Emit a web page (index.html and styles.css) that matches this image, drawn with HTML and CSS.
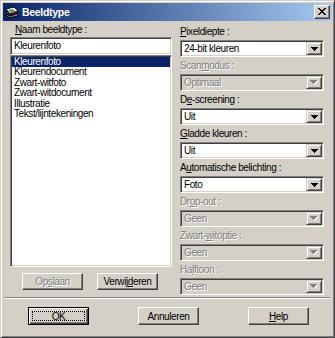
FILE: index.html
```html
<!DOCTYPE html>
<html lang="nl">
<head>
  <meta charset="UTF-8" />
  <title>Beeldtype</title>
  <link rel="stylesheet" href="styles.css">
</head>
<body>
  <div class="window">
    <div class="titlebar">
      <svg class="app-icon" width="14" height="13" viewBox="0 0 14 13">
        <path d="M1 3 L9 1 L13 5 L5 8 Z" fill="#fff" stroke="#000" stroke-width="1"/>
        <path d="M3 4 L8 3 L10 5 L5 6 Z" fill="#3cb043"/>
        <path d="M5 6 L10 5 L11 6 L6 7 Z" fill="#e03030"/>
        <path d="M1 8 L5 10 L13 7 L13 10 L5 12 L1 10 Z" fill="#7a7a7a" stroke="#000" stroke-width="1"/>
      </svg>
      <span class="title">Beeldtype</span>
      <button class="close-btn" aria-label="Sluiten">
        <svg width="8" height="7" viewBox="0 0 8 7" shape-rendering="crispEdges">
          <path d="M0 0h2v1h1v1h2v-1h1v-1h2v1h-1v1h-1v1h-1v1h1v1h1v1h1v1h-2v-1h-1v-1h-2v1h-1v1h-2v-1h1v-1h1v-1h1v-1h-1v-1h-1v-1h-1z"/>
        </svg>
      </button>
    </div>

    <div class="main">
      <!-- Left: image type list -->
      <div class="col-left">
        <div class="label-left"><u>N</u>aam beeldtype :</div>
        <div class="textbox">Kleurenfoto</div>
        <ul class="listbox">
          <li class="selected">Kleurenfoto</li>
          <li>Kleurendocument</li>
          <li>Zwart-witfoto</li>
          <li>Zwart-witdocument</li>
          <li>Illustratie</li>
          <li>Tekst/lijntekeningen</li>
        </ul>
        <div class="left-buttons">
          <button class="btn disabled">Op<u>s</u>laan</button>
          <button class="btn">Verwij<u>d</u>eren</button>
        </div>
      </div>

      <!-- Right: settings -->
      <div class="col-right">
        <div class="field">
          <div class="label"><u>P</u>ixeldiepte :</div>
          <div class="combo"><span class="value">24-bit kleuren</span><span class="arrow"><svg width="7" height="4" shape-rendering="crispEdges"><path d="M0 0h7v1h-1v1h-1v1h-1v1h-1v-1h-1v-1h-1v-1h-1z"/></svg></span></div>
        </div>
        <div class="field disabled">
          <div class="label">Scan<u>m</u>odus :</div>
          <div class="combo"><span class="value">Optimaal</span><span class="arrow"><svg width="8" height="5" shape-rendering="crispEdges"><path class="hl" d="M1 1h7v1h-1v1h-1v1h-1v1h-1v-1h-1v-1h-1v-1h-1z"/><path d="M0 0h7v1h-1v1h-1v1h-1v1h-1v-1h-1v-1h-1v-1h-1z"/></svg></span></div>
        </div>
        <div class="field">
          <div class="label">D<u>e</u>-screening :</div>
          <div class="combo"><span class="value">Uit</span><span class="arrow"><svg width="7" height="4" shape-rendering="crispEdges"><path d="M0 0h7v1h-1v1h-1v1h-1v1h-1v-1h-1v-1h-1v-1h-1z"/></svg></span></div>
        </div>
        <div class="field">
          <div class="label"><u>G</u>ladde kleuren :</div>
          <div class="combo"><span class="value">Uit</span><span class="arrow"><svg width="7" height="4" shape-rendering="crispEdges"><path d="M0 0h7v1h-1v1h-1v1h-1v1h-1v-1h-1v-1h-1v-1h-1z"/></svg></span></div>
        </div>
        <div class="field">
          <div class="label">A<u>u</u>tomatische belichting :</div>
          <div class="combo"><span class="value">Foto</span><span class="arrow"><svg width="7" height="4" shape-rendering="crispEdges"><path d="M0 0h7v1h-1v1h-1v1h-1v1h-1v-1h-1v-1h-1v-1h-1z"/></svg></span></div>
        </div>
        <div class="field disabled">
          <div class="label">Dr<u>o</u>p-out :</div>
          <div class="combo"><span class="value">Geen</span><span class="arrow"><svg width="8" height="5" shape-rendering="crispEdges"><path class="hl" d="M1 1h7v1h-1v1h-1v1h-1v1h-1v-1h-1v-1h-1v-1h-1z"/><path d="M0 0h7v1h-1v1h-1v1h-1v1h-1v-1h-1v-1h-1v-1h-1z"/></svg></span></div>
        </div>
        <div class="field disabled">
          <div class="label">Zwart-<u>w</u>itoptie :</div>
          <div class="combo"><span class="value">Geen</span><span class="arrow"><svg width="8" height="5" shape-rendering="crispEdges"><path class="hl" d="M1 1h7v1h-1v1h-1v1h-1v1h-1v-1h-1v-1h-1v-1h-1z"/><path d="M0 0h7v1h-1v1h-1v1h-1v1h-1v-1h-1v-1h-1v-1h-1z"/></svg></span></div>
        </div>
        <div class="field disabled">
          <div class="label">Ha<u>l</u>ftoon :</div>
          <div class="combo"><span class="value">Geen</span><span class="arrow"><svg width="8" height="5" shape-rendering="crispEdges"><path class="hl" d="M1 1h7v1h-1v1h-1v1h-1v1h-1v-1h-1v-1h-1v-1h-1z"/><path d="M0 0h7v1h-1v1h-1v1h-1v1h-1v-1h-1v-1h-1v-1h-1z"/></svg></span></div>
        </div>
      </div>
    </div>

    <div class="separator"></div>

    <div class="footer">
      <button class="btn default"><span class="focus">OK</span></button>
      <button class="btn">Annuleren</button>
      <button class="btn"><u>H</u>elp</button>
    </div>
  </div>
</body>
</html>
```

FILE: styles.css
```css
* {
  box-sizing: border-box;
  margin: 0;
  padding: 0;
}

body {
  background: #d4d0c8;
  font-family: "Liberation Sans", Arial, sans-serif;
  font-size: 10px;
  letter-spacing: -0.4px;
  color: #000;
}

u {
  text-decoration: underline;
  text-underline-offset: 1px;
}

.window {
  width: 335px;
  height: 338px;
  background: #d4d0c8;
  border: 1px solid;
  border-color: #d4d0c8 #404040 #404040 #d4d0c8;
  box-shadow: inset 1px 1px #fff, inset -1px -1px #808080;
  padding: 2px;
  display: flex;
  flex-direction: column;
}

/* Title bar */
.titlebar {
  height: 18px;
  background: linear-gradient(90deg, #0a246a, #a6caf0);
  display: flex;
  align-items: center;
  padding: 0 2px 0 2px;
}

.app-icon {
  margin-right: 3px;
}

.title {
  color: #fff;
  font-weight: bold;
  font-size: 10.5px;
  letter-spacing: -0.3px;
  flex: 1;
}

.close-btn {
  width: 16px;
  height: 14px;
  background: #d4d0c8;
  border: 1px solid;
  border-color: #fff #404040 #404040 #fff;
  box-shadow: inset -1px -1px #808080;
  display: flex;
  align-items: center;
  justify-content: center;
  padding-bottom: 1px;
}

/* Main columns */
.main {
  display: flex;
  gap: 8px;
  padding: 2px 8px 0 7px;
  height: 274px;
}

.col-left {
  width: 162px;
  display: flex;
  flex-direction: column;
}

.col-right {
  width: 144px;
  display: flex;
  flex-direction: column;
}

.label-left {
  height: 14px;
  line-height: 14px;
  padding-left: 5px;
}

.textbox,
.listbox,
.combo {
  border: 1px solid;
  border-color: #808080 #fff #fff #808080;
  box-shadow: inset 1px 1px #404040, inset -1px -1px #d4d0c8;
  padding: 1px;
  background: #fff;
}

.textbox {
  height: 18px;
  line-height: 14px;
  padding-left: 3px;
}

.listbox {
  list-style: none;
  height: 212px;
}

.listbox li {
  line-height: 10.4px;
  height: 10.4px;
  padding-left: 2px;
  white-space: nowrap;
}

.listbox li.selected {
  background: #0a246a;
  color: #fff;
}

.left-buttons {
  display: flex;
  gap: 14px;
  margin-top: 6px;
  padding-left: 12px;
}

/* Buttons */
.btn {
  font-family: inherit;
  font-size: 10px;
  letter-spacing: -0.4px;
  color: #000;
  width: 61px;
  height: 17px;
  background: #d4d0c8;
  border: 1px solid;
  border-color: #fff #404040 #404040 #fff;
  box-shadow: inset -1px -1px #808080;
  display: flex;
  align-items: center;
  justify-content: center;
}

.btn.disabled {
  color: #808080;
  text-shadow: 1px 1px 0 #fff;
}

.btn.default {
  border: 1px solid #000;
  box-shadow: inset 1px 1px #fff, inset -1px -1px #404040, inset -2px -2px #808080;
  padding: 3px;
}

.focus {
  flex: 1;
  align-self: stretch;
  border: 1px dotted #000;
  display: flex;
  align-items: center;
  justify-content: center;
}

/* Right settings */
.field .label {
  height: 17px;
  line-height: 13px;
  padding-top: 2px;
  white-space: nowrap;
}

.combo {
  height: 17px;
  display: flex;
}

.combo .value {
  flex: 1;
  line-height: 13px;
  padding-left: 2px;
}

.combo .arrow {
  width: 16px;
  height: 13px;
  background: #d4d0c8;
  border: 1px solid;
  border-color: #d4d0c8 #404040 #404040 #d4d0c8;
  box-shadow: inset 1px 1px #fff, inset -1px -1px #808080;
  display: flex;
  align-items: center;
  justify-content: center;
}

.field.disabled .label,
.field.disabled .value {
  color: #808080;
  text-shadow: 1px 1px 0 #fff;
}

.field.disabled .combo {
  background: #d4d0c8;
}

.field.disabled .arrow path {
  fill: #808080;
}

.field.disabled .arrow path.hl {
  fill: #fff;
}

/* Bottom */
.separator {
  margin: 2px 2px 0;
  border-top: 1px solid #808080;
  border-bottom: 1px solid #fff;
}

.footer {
  display: flex;
  gap: 49px;
  margin-top: 8px;
  padding-left: 25px;
}

.footer .btn {
  height: 18px;
}
```
